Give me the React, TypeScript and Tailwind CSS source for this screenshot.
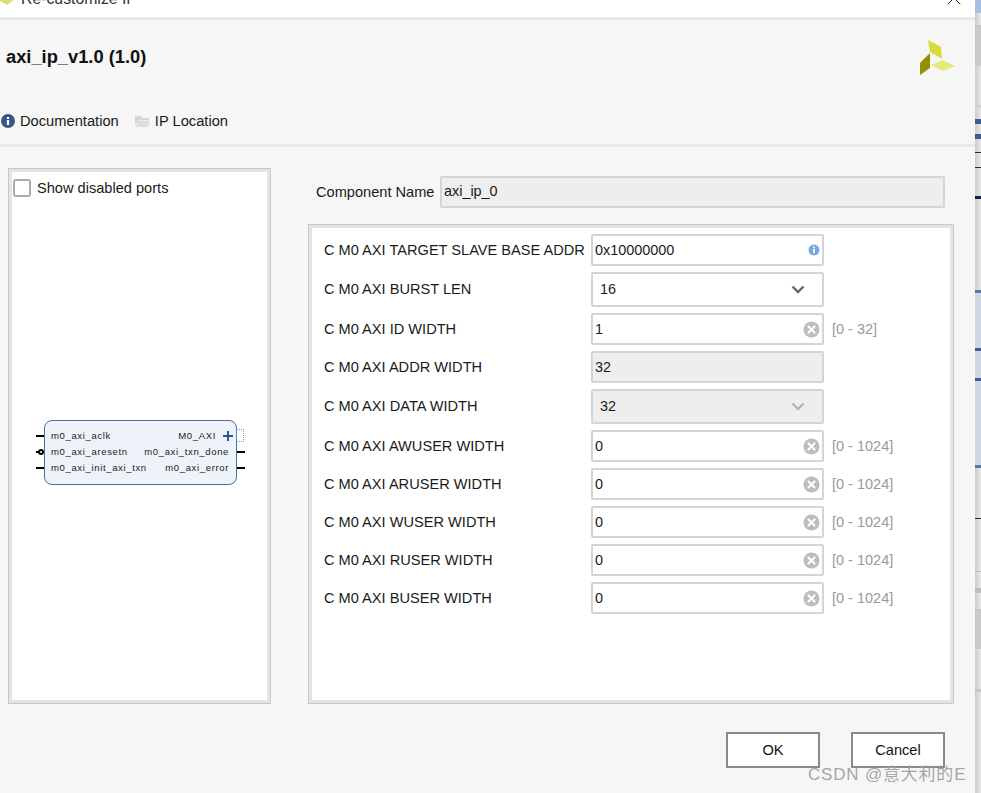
import React from 'react';
import { X } from 'lucide-react';

const stripSegments = [
  { h: 'h-[13px]', c: 'bg-[#a9bfdf]' },
  { h: 'h-[12px]', c: '' },
  { h: 'h-[41px]', c: 'bg-[#c9c9c9]' },
  { h: 'h-[39px]', c: '' },
  { h: 'h-[3px]', c: 'bg-[#cfcfcf]' },
  { h: 'h-[11px]', c: '' },
  { h: 'h-[5px]', c: 'bg-[#3f5a94]' },
  { h: 'h-[10px]', c: '' },
  { h: 'h-[5px]', c: 'bg-[#3f5a94]' },
  { h: 'h-[13px]', c: '' },
  { h: 'h-px', c: 'bg-[#1c2b45]' },
  { h: 'h-[14px]', c: '' },
  { h: 'h-px', c: 'bg-[#1c2b45]' },
  { h: 'h-[28px]', c: '' },
  { h: 'h-[3px]', c: 'bg-[#10233f]' },
  { h: 'h-[91px]', c: '' },
  { h: 'h-[3px]', c: 'bg-[#5a75a8]' },
  { h: 'h-[55px]', c: 'bg-[#cdd8e4]' },
  { h: 'h-[3px]', c: 'bg-[#3f5a94]' },
  { h: 'h-[27px]', c: 'bg-[#cdd8e4]' },
  { h: 'h-[3px]', c: 'bg-[#3f5a94]' },
  { h: 'h-[84px]', c: 'bg-[#cdd8e4]' },
  { h: 'h-[3px]', c: 'bg-[#5a75a8]' },
  { h: 'h-[50px]', c: '' },
  { h: 'h-px', c: 'bg-[#1c2b45]' },
  { h: 'h-[52px]', c: '' },
  { h: 'h-px', c: 'bg-[#bdbdbd]' },
  { h: 'h-[16px]', c: '' },
  { h: 'h-[5px]', c: 'bg-[#bdbdbd]' },
  { h: 'h-[16px]', c: '' },
  { h: 'h-[40px]', c: 'bg-[#c9c9c9]' },
  { h: 'h-[40px]', c: '' },
  { h: 'h-[3px]', c: 'bg-[#c4c4c4]' },
];

type Row = {
  label: string;
  value: string;
  kind: 'info' | 'select' | 'clear' | 'readonly' | 'select-disabled';
  range?: string;
};

const rows: Row[] = [
  { label: 'C M0 AXI TARGET SLAVE BASE ADDR', value: '0x10000000', kind: 'info' },
  { label: 'C M0 AXI BURST LEN', value: '16', kind: 'select' },
  { label: 'C M0 AXI ID WIDTH', value: '1', kind: 'clear', range: '[0 - 32]' },
  { label: 'C M0 AXI ADDR WIDTH', value: '32', kind: 'readonly' },
  { label: 'C M0 AXI DATA WIDTH', value: '32', kind: 'select-disabled' },
  { label: 'C M0 AXI AWUSER WIDTH', value: '0', kind: 'clear', range: '[0 - 1024]' },
  { label: 'C M0 AXI ARUSER WIDTH', value: '0', kind: 'clear', range: '[0 - 1024]' },
  { label: 'C M0 AXI WUSER WIDTH', value: '0', kind: 'clear', range: '[0 - 1024]' },
  { label: 'C M0 AXI RUSER WIDTH', value: '0', kind: 'clear', range: '[0 - 1024]' },
  { label: 'C M0 AXI BUSER WIDTH', value: '0', kind: 'clear', range: '[0 - 1024]' },
];

const ClearIcon = () => (
  <svg width="17" height="17" viewBox="0 0 17 17">
    <circle cx="8.5" cy="8.5" r="8" fill="#bdbdbd" />
    <path d="M5.5 5.5l6 6M11.5 5.5l-6 6" stroke="#fff" strokeWidth="2.2" strokeLinecap="round" />
  </svg>
);

const SmallInfo = () => (
  <svg width="12" height="12" viewBox="0 0 12 12">
    <circle cx="6" cy="6" r="5.5" fill="#79a7e3" />
    <rect x="5.1" y="5" width="1.8" height="4.2" fill="#fff" />
    <rect x="5.1" y="2.6" width="1.8" height="1.6" fill="#fff" />
  </svg>
);

const Chevron = ({ color }: { color: string }) => (
  <svg width="14" height="9" viewBox="0 0 14 9">
    <path d="M1.5 1.5L7 7l5.5-5.5" fill="none" stroke={color} strokeWidth="2.4" />
  </svg>
);

const ParamRow = ({ row }: { row: Row }) => {
  const isSelect = row.kind === 'select' || row.kind === 'select-disabled';
  const grey = row.kind === 'readonly' || row.kind === 'select-disabled';
  return (
    <div className="flex items-center">
      <div className={`w-[267px] text-[14.6px] text-[#1a1a1a] whitespace-nowrap ${isSelect ? '' : 'pt-px'}`}>
        {row.label}
      </div>
      <div
        className={`w-[233px] flex items-center justify-between border-2 border-[#d4d4d4] rounded-[2px] ${
          isSelect ? 'h-[35px] pl-[7px] pr-[17px]' : 'h-[32px] pl-[2px] pr-[2px]'
        } ${grey ? 'bg-[#eeeeee]' : 'bg-white'}`}
      >
        <span className={`text-[14.4px] text-[#1a1a1a] ${isSelect ? '' : 'pt-px'}`}>{row.value}</span>
        {row.kind === 'info' && (
          <span className="flex">
            <SmallInfo />
          </span>
        )}
        {row.kind === 'clear' && <ClearIcon />}
        {row.kind === 'select' && <Chevron color="#666666" />}
        {row.kind === 'select-disabled' && <Chevron color="#b5b5b5" />}
      </div>
      {row.range && <span className={`ml-2 text-[14.5px] text-[#999999] ${isSelect ? '' : 'pt-px'}`}>{row.range}</span>}
    </div>
  );
};

const IpBlock = () => (
  <div className="relative w-[193px] h-[65px] ml-[35px] mt-[220px] pb-[2px] rounded-[8px] border border-[#4a6aa8] bg-[#eef3fa] flex flex-col justify-center gap-[5px] pl-[6px] pr-[7px] font-['Liberation_Sans',sans-serif] text-[9.5px] tracking-[0.65px] leading-[11px] text-[#222]">
    <div className="flex justify-between pr-[13px]">
      <span>m0_axi_aclk</span>
      <span>M0_AXI</span>
    </div>
    <div className="flex justify-between">
      <span>m0_axi_aresetn</span>
      <span>m0_axi_txn_done</span>
    </div>
    <div className="flex justify-between">
      <span>m0_axi_init_axi_txn</span>
      <span>m0_axi_error</span>
    </div>
    {/* pins */}
    <div className="absolute left-[-9px] top-[14px] w-[8px] h-[2px] bg-black" />
    <div className="absolute left-[-9px] top-[30px] w-[3px] h-[2px] bg-black" />
    <div className="absolute left-[-7px] top-[28px] w-[6px] h-[6px] rounded-full border-2 border-black" />
    <div className="absolute left-[-9px] top-[46px] w-[8px] h-[2px] bg-black" />
    <div className="absolute right-[-9px] top-[30px] w-[8px] h-[2px] bg-black" />
    <div className="absolute right-[-9px] top-[46px] w-[8px] h-[2px] bg-black" />
    <svg className="absolute right-[3px] top-[10px]" width="10" height="10" viewBox="0 0 10 10">
      <path d="M5 0v10M0 5h10" stroke="#2f5597" strokeWidth="2" />
    </svg>
    <div className="absolute right-[-8px] top-[8px] w-[8px] h-[13px] border border-dotted border-[#6f9ee0]" />
  </div>
);

const App = () => {
  return (
    <div className="w-[981px] h-[793px] overflow-hidden flex font-['Liberation_Sans',sans-serif] bg-[#f6f6f6]">
      <div className="w-[975px] flex flex-col">
        {/* title bar, cut off by the top of the picture */}
        <div className="h-[20px] shrink-0 bg-white border-b-[3px] border-[#e8e8e8] overflow-hidden flex items-end justify-between">
          <div className="flex items-center gap-[6px] mb-[10px]">
            <svg width="15" height="12" viewBox="0 0 15 12">
              <path d="M0 4l7-4 8 6-8 6-7-4z" fill="#dcdc7a" />
            </svg>
            <span className="text-[15.8px] leading-[17px] text-[#333]">Re-customize IP</span>
          </div>
          <X className="mr-[9px] mb-[7px]" size={24} strokeWidth={1} color="#222" />
        </div>

        {/* header */}
        <div className="h-[127px] shrink-0 border-b-[3px] border-[#e8e8e8] flex flex-col relative">
          <div className="mt-[26px] ml-[6px] text-[18.3px] leading-[22px] font-bold text-[#111]">axi_ip_v1.0 (1.0)</div>
          <div className="mt-[44px] flex items-center text-[14.7px] leading-[18px] text-[#1a1a1a]">
            <svg className="ml-[1px]" width="14" height="14" viewBox="0 0 14 14">
              <circle cx="7" cy="7" r="7" fill="#3b5488" />
              <rect x="5.9" y="6" width="2.2" height="5" fill="#fff" />
              <rect x="5.9" y="3" width="2.2" height="2" fill="#fff" />
            </svg>
            <span className="ml-[5px]">Documentation</span>
            <svg className="ml-[16px]" width="15" height="14" viewBox="0 0 15 14">
              <path d="M0 2h6l1.5 2H14v2H3L0 12z" fill="#d4d4d4" />
              <path d="M3 6.5h12L13 13H0.5z" fill="#dedede" />
            </svg>
            <span className="ml-[5px]">IP Location</span>
          </div>
          <svg className="absolute right-[19px] top-[20px]" width="36" height="36" viewBox="0 0 36 36">
            <polygon points="8,0 21,7 22,19 10,12" fill="#d6dc3c" />
            <polygon points="11,25 23,20 35,26 23,31" fill="#e5ea78" />
            <polygon points="0,23 10,13 10,28 0,35" fill="#8f9100" />
          </svg>
        </div>

        {/* body */}
        <div className="flex mt-[21px]">
          <div className="ml-[8px] w-[263px] h-[536px] border border-[#c8c8c8] shadow-[inset_0_0_0_3px_#e4e4e4] bg-white">
            <label className="flex items-center mt-[8px] ml-[4px]">
              <span className="w-[18px] h-[18px] rounded-[3px] border-2 border-[#aaaaaa] bg-white" />
              <span className="ml-[6px] pt-px text-[14.6px] text-[#1a1a1a]">Show disabled ports</span>
            </label>
            <IpBlock />
          </div>

          <div className="ml-[37px] w-[646px] flex flex-col">
            <div className="flex items-center mt-[8px]">
              <span className="ml-[8px] w-[124px] pt-px text-[14.6px] text-[#1a1a1a]">Component Name</span>
              <div className="w-[505px] h-[32px] pl-[2px] flex items-center border-2 border-[#d4d4d4] rounded-[2px] bg-[#eeeeee] text-[14.4px] text-[#1a1a1a]">
                axi_ip_0
              </div>
            </div>
            <div className="mt-[16px] h-[480px] border border-[#c8c8c8] shadow-[inset_0_0_0_3px_#e4e4e4] bg-white pl-[15px] pt-[9px] flex flex-col gap-[6px]">
              {rows.map((row) => (
                <ParamRow key={row.label} row={row} />
              ))}
            </div>
          </div>
        </div>

        {/* footer */}
        <div className="flex mt-[28px] ml-[726px] gap-[31px]">
          <button className="w-[94px] h-[36px] pt-px border-2 border-[#8a8a8a] bg-white text-[14.6px] text-[#111]">OK</button>
          <button className="w-[94px] h-[36px] pt-px border-2 border-[#8a8a8a] bg-white text-[14.6px] text-[#111]">Cancel</button>
        </div>
      </div>

      {/* desktop showing behind the dialog */}
      <div className="w-[6px] flex flex-col bg-gradient-to-r from-[#cccccc] to-[#e8e8e8]">
        {stripSegments.map((s, i) => (
          <div key={i} className={`${s.h} shrink-0 ${s.c}`} />
        ))}
      </div>

      <div className="absolute left-[808px] top-[764px] text-[17px] leading-[22px] tracking-[0.8px] text-[#9a9a9a]/90 font-['Liberation_Sans','Noto_Sans_CJK_SC',sans-serif] whitespace-nowrap">
        CSDN @意大利的E
      </div>
    </div>
  );
};

export default App;
